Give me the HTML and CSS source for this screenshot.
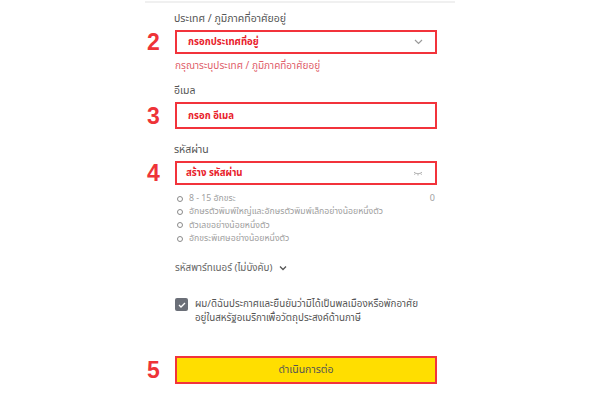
FILE: index.html
```html
<!DOCTYPE html>
<html lang="th">
<head>
<meta charset="utf-8">
<link rel="stylesheet" href="styles.css">
</head>
<body>
<div class="page">
  <div class="topline"></div>

  <div class="label l1">ประเทศ / ภูมิภาคที่อาศัยอยู่</div>
  <div class="row">
    <span class="num">2</span>
    <div class="box b1">
      <span class="val">กรอกประเทศที่อยู่</span>
      <svg class="chev" width="9" height="6" viewBox="0 0 9 6"><path d="M1 1l3.5 3.5L8 1" fill="none" stroke="#9a9a9a" stroke-width="1.2"/></svg>
    </div>
  </div>
  <div class="helper">กรุณาระบุประเทศ / ภูมิภาคที่อาศัยอยู่</div>

  <div class="label l2">อีเมล</div>
  <div class="row">
    <span class="num">3</span>
    <div class="box b2"><span class="val">กรอก อีเมล</span></div>
  </div>

  <div class="label l3">รหัสผ่าน</div>
  <div class="row">
    <span class="num">4</span>
    <div class="box b3">
      <span class="val v3">สร้าง รหัสผ่าน</span>
      <svg class="eye" width="10" height="5" viewBox="0 0 10 5"><path d="M1 1.2c2.4 2 5.6 2 8 0M2.2 2.4l-.7 1.4M5 3v1.5M7.8 2.4l.7 1.4" fill="none" stroke="#a0a0a0" stroke-width="0.8"/></svg>
    </div>
  </div>

  <ul class="rules">
    <li><span>8 - 15 อักขระ</span><span class="count">0</span></li>
    <li><span>อักษรตัวพิมพ์ใหญ่และอักษรตัวพิมพ์เล็กอย่างน้อยหนึ่งตัว</span></li>
    <li><span>ตัวเลขอย่างน้อยหนึ่งตัว</span></li>
    <li><span>อักขระพิเศษอย่างน้อยหนึ่งตัว</span></li>
  </ul>

  <div class="partner">รหัสพาร์ทเนอร์ (ไม่บังคับ)
    <svg class="pchev" width="8" height="6" viewBox="0 0 8 6"><path d="M1 1.5l3 3 3-3" fill="none" stroke="#555" stroke-width="1.3"/></svg>
  </div>

  <div class="consent">
    <span class="check"><svg width="8" height="6" viewBox="0 0 8 6"><path d="M1 3l2 2 4-4" fill="none" stroke="#fff" stroke-width="1.3"/></svg></span>
    <p>ผม/ดิฉันประกาศและยืนยันว่ามิได้เป็นพลเมืองหรือพักอาศัย อยู่ในสหรัฐอเมริกาเพื่อวัตถุประสงค์ด้านภาษี</p>
  </div>

  <div class="row btnrow">
    <span class="num">5</span>
    <div class="btn">ดำเนินการต่อ</div>
  </div>
</div>
</body>
</html>
```

FILE: styles.css
```css
* { box-sizing: border-box; }
html, body { margin: 0; padding: 0; background: #fff; }
body {
  font-family: "Noto Sans Thai", "Noto Sans", "DejaVu Sans", sans-serif;
  color: #555;
}
.page {
  width: 310px;
  margin: 0 auto;
  padding-top: 1px;
}
.topline {
  height: 2px;
  background: #f0f0f0;
}
.label {
  margin-left: 29px;
  font-size: 10.5px;
  line-height: 14px;
  color: #555;
}
.l1 { margin-top: 9px; }
.l2 { margin-top: 11px; }
.l3 { margin-top: 14px; }
.row {
  display: flex;
  align-items: center;
  margin-top: 4px;
}
.num {
  width: 30px;
  padding-left: 2px;
  font-family: "Liberation Sans", Arial, sans-serif;
  font-weight: bold;
  font-size: 23px;
  line-height: 20px;
  color: #ee3338;
}
.box {
  width: 262px;
  border: 2px solid #f2333b;
  display: flex;
  align-items: center;
  justify-content: space-between;
  padding: 0 12px 0 11px;
}
.b1 { height: 24px; }
.b2 { height: 27px; }
.b3 { height: 24px; padding-left: 9px; }
.val {
  font-size: 9.6px;
  font-weight: bold;
  color: #e8202a;
}
.helper {
  margin: 5px 0 0 30px;
  font-size: 10px;
  line-height: 14px;
  color: #e0606a;
}
.rules {
  list-style: none;
  margin: 7px 0 0 30px;
  padding: 0;
  width: 262px;
}
.rules li {
  display: flex;
  justify-content: space-between;
  align-items: center;
  font-size: 8.7px;
  line-height: 13.33px;
  color: #a0a0a0;
}
.rules li > span:first-child::before {
  content: "";
  display: inline-block;
  width: 4px;
  height: 4px;
  border: 1.2px solid #8a8a8a;
  border-radius: 50%;
  margin: 0 6px 0 2px;
  vertical-align: middle;
}
.count { margin-right: 2px; font-size: 9px; }
.partner {
  margin: 16px 0 0 30px;
  font-size: 9.8px;
  line-height: 14px;
  color: #666;
  display: flex;
  align-items: center;
  gap: 7px;
}
.consent {
  display: flex;
  align-items: flex-start;
  margin: 22px 0 0 30px;
  width: 262px;
}
.check {
  flex: none;
  width: 13px;
  height: 13px;
  border-radius: 2px;
  background: #6b6f78;
  display: flex;
  align-items: center;
  justify-content: center;
  margin-top: 1px;
}
.consent p {
  margin: 0 0 0 7px;
  font-size: 9.8px;
  line-height: 14px;
  color: #555;
  width: 236px;
}
.btnrow { margin-top: 31px; }
.btn {
  width: 262px;
  height: 28px;
  background: #ffde00;
  border: 2px solid #f2333b;
  display: flex;
  align-items: center;
  justify-content: center;
  font-size: 10.5px;
  color: #555;
}
```
